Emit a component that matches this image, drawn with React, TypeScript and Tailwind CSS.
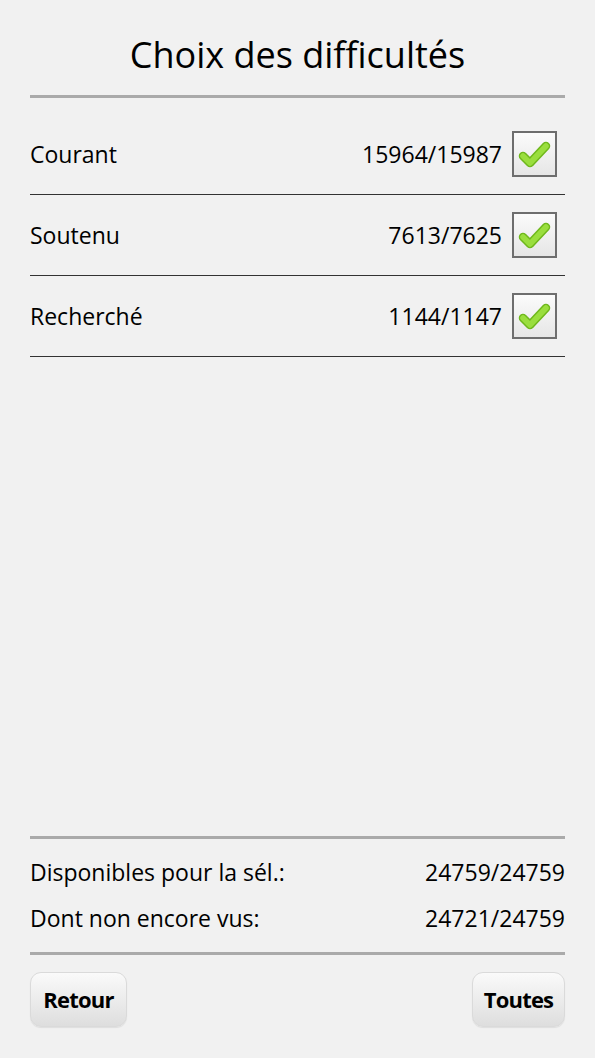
const rows = [
  { label: "Courant", count: "15964/15987" },
  { label: "Soutenu", count: "7613/7625" },
  { label: "Recherché", count: "1144/1147" },
];

function CheckBox() {
  return (
    <div className="mr-[8px] ml-[10px] flex h-[46px] w-[45px] items-center justify-center border-2 border-[#6e6e6e] bg-gradient-to-b from-[#fbfbfb] to-[#e6e6e6]">
      <svg width="36" height="32" viewBox="0 0 36 32">
        <polyline points="6,18 13,25 29,8" fill="none" stroke="#6fb81c" strokeWidth="8.5" strokeLinecap="round" strokeLinejoin="round" />
        <polyline points="6,18 13,25 29,8" fill="none" stroke="#9ade3e" strokeWidth="5.5" strokeLinecap="round" strokeLinejoin="round" />
      </svg>
    </div>
  );
}

function Button({ children, className }: { children: React.ReactNode; className: string }) {
  return (
    <button
      className={`h-[55px] rounded-[11px] border border-[#dadada] bg-gradient-to-b from-[#fafafa] to-[#dedede] text-[22px] font-bold tracking-[-0.8px] text-black shadow-[0_1px_1px_rgba(0,0,0,0.08)] ${className}`}
    >
      {children}
    </button>
  );
}

export default function App() {
  return (
    <div
      className="flex h-[1058px] w-[595px] flex-col bg-[#f1f1f1] px-[30px] text-black"
      style={{ fontFamily: '"Open Sans", "Noto Sans", sans-serif' }}
    >
      <h1 className="mb-[16px] pt-[31px] text-center text-[36px] leading-[48px]">Choix des difficultés</h1>
      <div className="h-[3px] bg-[#aaaaaa]" />

      <div className="mt-[16px]">
        {rows.map((r) => (
          <div key={r.label} className="flex h-[81px] items-center border-b border-[#333333] text-[23px]">
            <span className="flex-1">{r.label}</span>
            <span>{r.count}</span>
            <CheckBox />
          </div>
        ))}
      </div>

      <div className="flex-1" />

      <div className="h-[3px] bg-[#aaaaaa]" />
      <div className="pt-[10px] pb-[11px] text-[23px]">
        <div className="flex h-[46px] items-center justify-between">
          <span>Disponibles pour la sél.:</span>
          <span>24759/24759</span>
        </div>
        <div className="flex h-[46px] items-center justify-between">
          <span>Dont non encore vus:</span>
          <span>24721/24759</span>
        </div>
      </div>
      <div className="h-[3px] bg-[#aaaaaa]" />

      <div className="mt-[17px] mb-[31px] flex justify-between">
        <Button className="w-[97px]">Retour</Button>
        <Button className="w-[93px]">Toutes</Button>
      </div>
    </div>
  );
}
